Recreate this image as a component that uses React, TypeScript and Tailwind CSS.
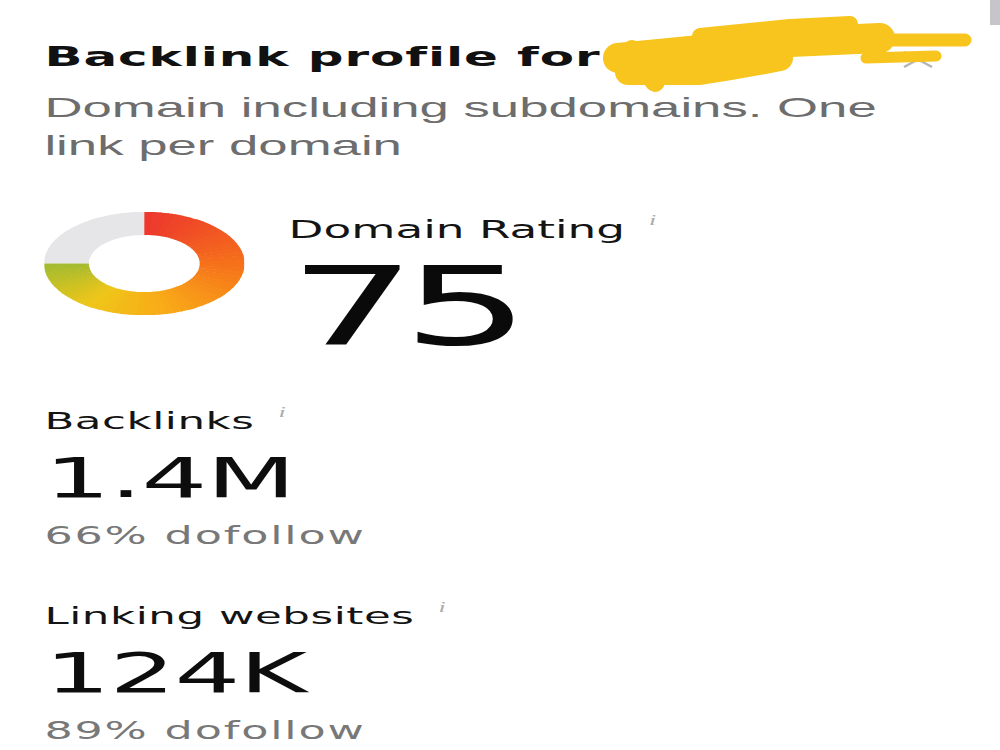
import type { ReactNode } from 'react'

// Ring colour stops, from 12 o'clock going clockwise over the filled part.
const RING_STOPS: [number, string][] = [
  [0, '#ec382d'],
  [0.33, '#f6701a'],
  [0.62, '#f9aa18'],
  [0.8, '#efc619'],
  [1, '#a5bb30'],
]

const RATING = 75

function hexToRgb(hex: string) {
  const n = parseInt(hex.slice(1), 16)
  return [(n >> 16) & 255, (n >> 8) & 255, n & 255]
}

function colorAt(t: number) {
  for (let i = 1; i < RING_STOPS.length; i++) {
    const [t1, c1] = RING_STOPS[i]
    const [t0, c0] = RING_STOPS[i - 1]
    if (t <= t1) {
      const k = (t - t0) / (t1 - t0)
      const a = hexToRgb(c0)
      const b = hexToRgb(c1)
      const mix = a.map((v, j) => Math.round(v + (b[j] - v) * k))
      return `rgb(${mix[0]},${mix[1]},${mix[2]})`
    }
  }
  return RING_STOPS[RING_STOPS.length - 1][1]
}

function arc(r: number, fromDeg: number, toDeg: number) {
  const p = (deg: number) => {
    const rad = (deg * Math.PI) / 180
    return `${(50 + r * Math.sin(rad)).toFixed(2)} ${(50 - r * Math.cos(rad)).toFixed(2)}`
  }
  const large = toDeg - fromDeg > 180 ? 1 : 0
  return `M ${p(fromDeg)} A ${r} ${r} 0 ${large} 1 ${p(toDeg)}`
}

function RatingRing({ value }: { value: number }) {
  const sweep = (value / 100) * 360
  const steps = 60
  const segments = Array.from({ length: steps }, (_, i) => {
    const a = (sweep / steps) * i
    const b = Math.min(sweep, a + sweep / steps + 0.8)
    return <path key={i} d={arc(39, a, b)} stroke={colorAt(i / (steps - 1))} strokeWidth={22.5} fill="none" />
  })

  return (
    <svg viewBox="0 0 100 100" preserveAspectRatio="none" className="h-[103px] w-[108px] shrink-0">
      <path d={arc(39, sweep, 360)} stroke="#e6e6e9" strokeWidth={22.5} fill="none" />
      {segments}
    </svg>
  )
}

function InfoMark({ className = '' }: { className?: string }) {
  return (
    <span
      className={`ml-[13px] font-['Liberation_Serif',serif] text-[14px] leading-none tracking-normal text-[#ababab] italic ${className}`}
    >
      i
    </span>
  )
}

function Label({ children, className = '' }: { children: ReactNode; className?: string }) {
  return (
    <div className={`flex items-start text-[#141414] ${className}`}>
      <span>{children}</span>
      <InfoMark className="-mt-[1px]" />
    </div>
  )
}

function Metric({ label, value, note, className = '' }: { label: string; value: string; note: string; className?: string }) {
  return (
    <div className={className}>
      <Label className="text-[23.5px] leading-[28px] tracking-[0.3px]">{label}</Label>
      <div className="mt-[13px] text-[56px] leading-[60px] tracking-[-0.5px] text-[#0d0d0d]">{value}</div>
      <div className="mt-[14px] text-[24px] leading-[28px] tracking-[1px] text-[#787878]">{note}</div>
    </div>
  )
}

function Redaction() {
  return (
    <svg viewBox="0 0 1000 100" className="pointer-events-none absolute left-0 top-0 h-[100px] w-[1000px]">
      <path d="M904 52 L932 67 M904 67 L932 52" stroke="#b4b4b4" strokeWidth={2.5} />
      <g stroke="#f7c51d" strokeLinecap="round" strokeLinejoin="round" fill="none">
        <path d="M618 58 L700 50 L790 42 L880 38" strokeWidth={30} />
        <path d="M628 72 L700 72 Q740 66 780 58" strokeWidth={26} />
        <path d="M632 50 L655 82" strokeWidth={20} />
        <path d="M700 36 L790 27 L850 24" strokeWidth={16} />
        <path d="M870 40 L965 40" strokeWidth={13} />
        <path d="M866 58 L936 56" strokeWidth={11} />
      </g>
    </svg>
  )
}

export default function App() {
  return (
    <div className="relative h-[750px] w-[1000px] overflow-hidden bg-white font-['DejaVu_Sans','Liberation_Sans',sans-serif]">
      {/* Panel is laid out narrow and stretched sideways to the full width. */}
      <div className="w-[541px] origin-top-left scale-x-[1.85] px-[24px] pt-[41px]">
        <h2 className="text-[27px] leading-[32px] font-bold tracking-[0.5px] text-[#111111]">Backlink profile for</h2>
        <p className="mt-[15px] max-w-[470px] font-['Liberation_Sans',Arial,sans-serif] text-[28.5px] leading-[38px] text-[#6d6d6d]">
          Domain including subdomains. One link per domain
        </p>

        <div className="mt-[48px] flex items-start gap-[24px]">
          <RatingRing value={RATING} />
          <div className="pt-[3px]">
            <Label className="text-[24.5px] leading-[30px]">Domain Rating</Label>
            <div className="mt-[12px] text-[109px] leading-[100px] tracking-[-8px] text-[#0a0a0a]">{RATING}</div>
          </div>
        </div>

        <Metric className="mt-[50px]" label="Backlinks" value="1.4M" note="66% dofollow" />
        <Metric className="mt-[52px]" label="Linking websites" value="124K" note="89% dofollow" />
      </div>

      <Redaction />
      <div className="absolute right-0 top-0 h-[25px] w-[10px] bg-[#c6c6ca]" />
    </div>
  )
}
